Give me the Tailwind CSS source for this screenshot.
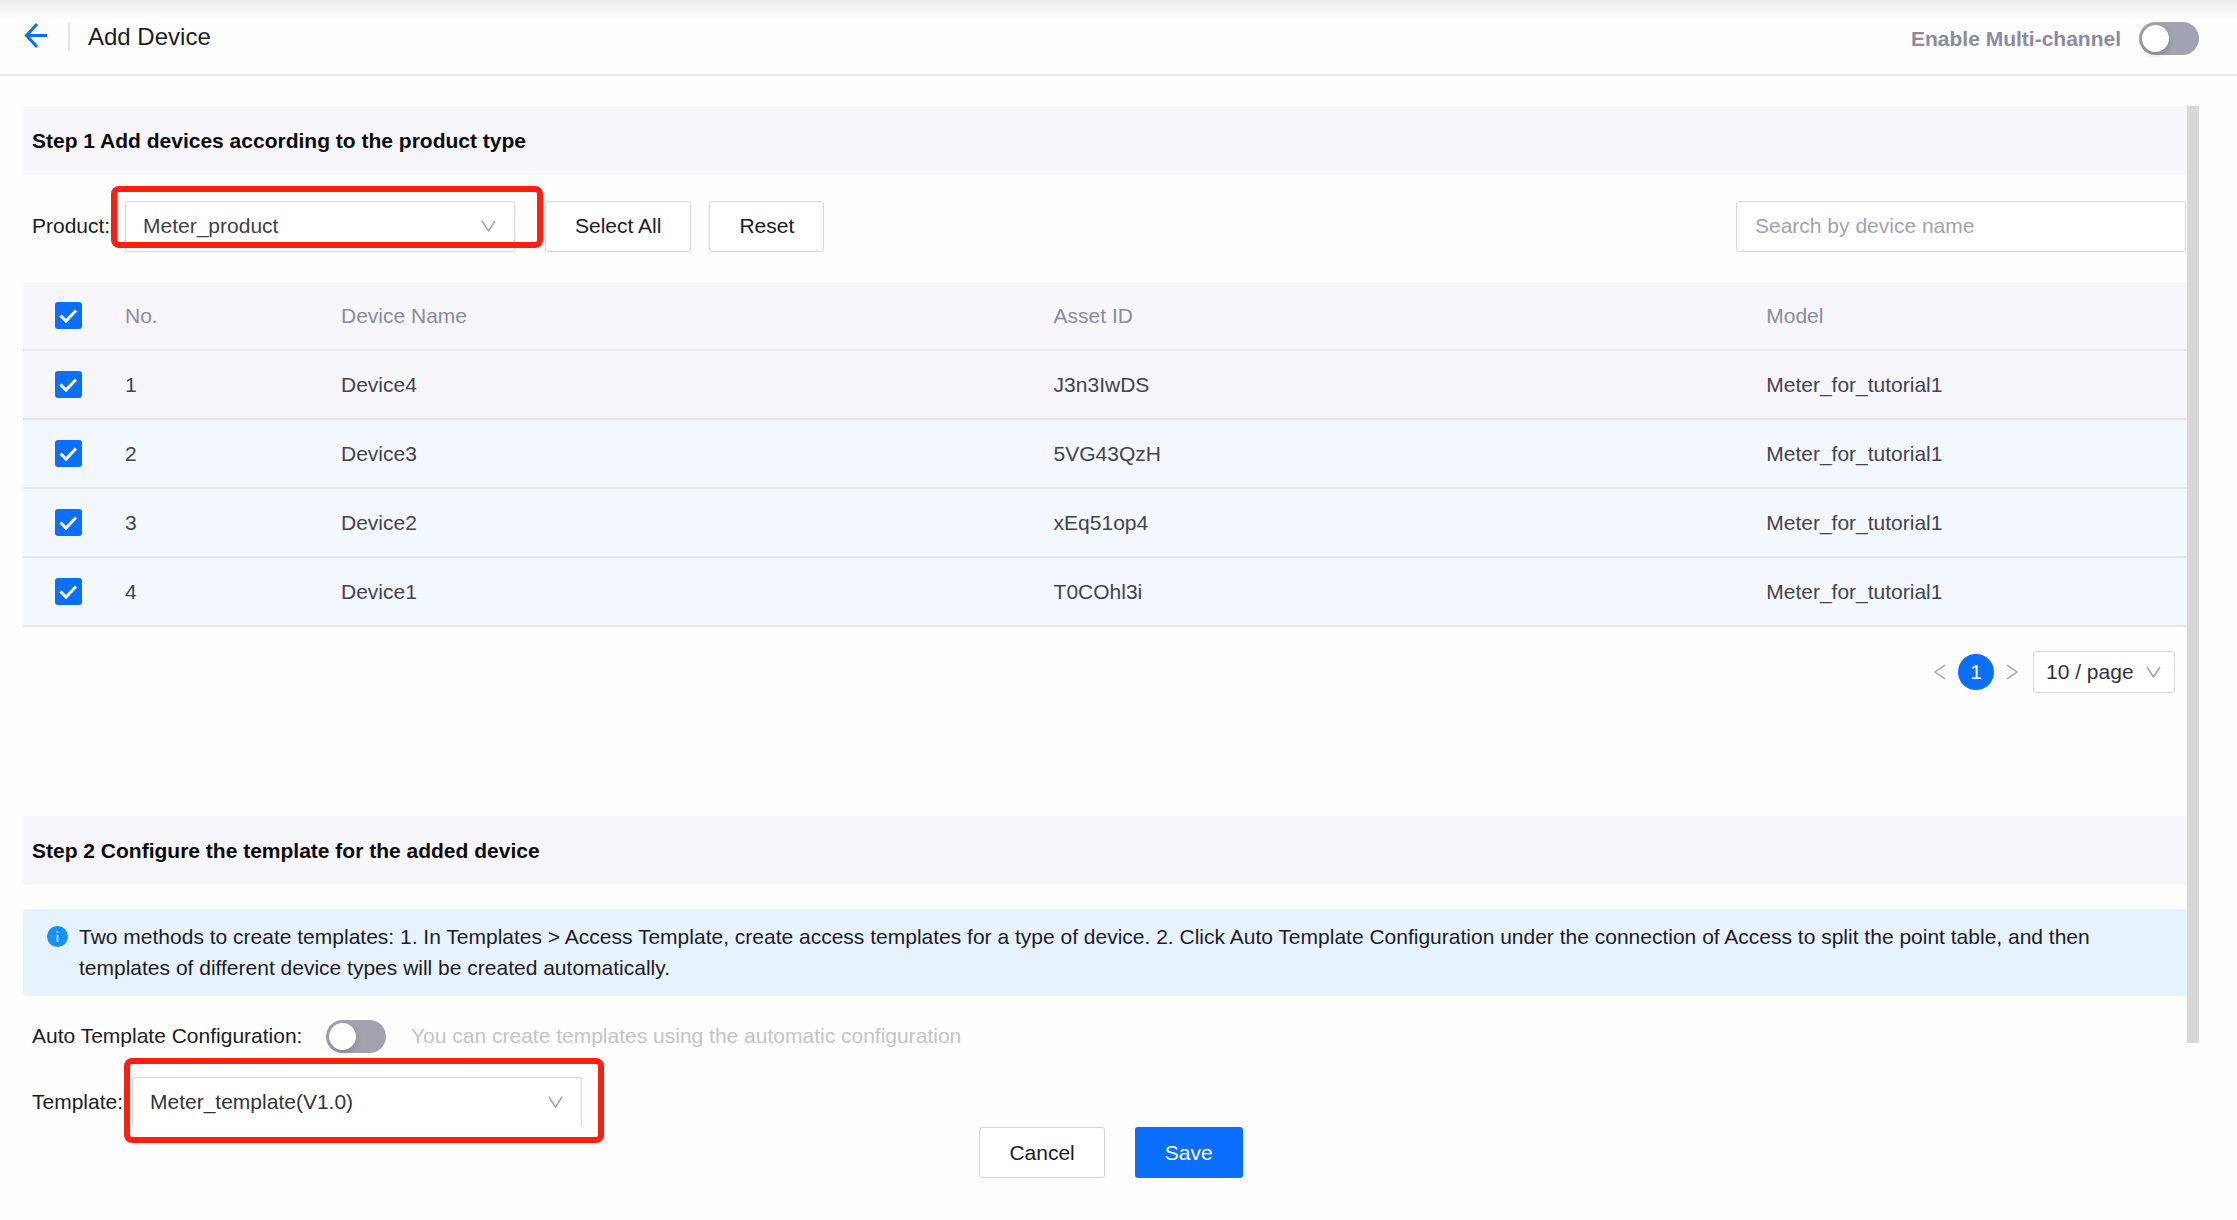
<!DOCTYPE html>
<html lang="en">
<head>
<meta charset="utf-8">
<title>Add Device</title>
<script src="https://cdn.jsdelivr.net/npm/@tailwindcss/browser@4"></script>
</head>
<body class="min-h-screen bg-[#fefefe] font-['Liberation_Sans',Arial,sans-serif] text-[21px] leading-[31px] text-[#1c1c1e]">
<header class="flex items-center justify-between border-b-2 border-[#ebebed] bg-linear-to-b from-[#ededed] to-[#fefefe] to-25% pr-[38px] pl-6 h-[76px]">
  <div class="flex items-center">
    <a href="#" aria-label="Back" class="block"><svg class="block h-7 w-6" viewBox="0 0 24 28" fill="none" stroke="#0b6efd" stroke-width="3"><path d="M13 1 2.500 12.500 13 24M2.500 12.500H23"/></svg></a>
    <span class="ml-5 h-7 w-[2px] bg-[#e3e3e6]"></span>
    <h1 class="ml-[18px] text-2xl">Add Device</h1>
  </div>
  <label class="flex items-center gap-[18px] pt-[2px] font-bold text-[#8b8b9b]">Enable Multi-channel
    <input type="checkbox" role="switch" class="relative h-[33px] w-[60px] appearance-none rounded-full bg-[#a2a2b0] before:absolute before:top-[3px] before:left-[3px] before:size-[27px] before:rounded-full before:bg-white before:shadow-[0_3px_6px_rgba(0,35,11,0.2)]">
  </label>
</header>

<main class="pt-[30px] pr-[38px] pb-10 pl-[23px]">
  <div class="flex">
    <div class="min-w-0 flex-1">
      <section>
        <h2 class="bg-[#f6f6fb] px-[9px] py-[19px] font-bold text-[#0a0a0a]">Step 1 Add devices according to the product type</h2>
        <div class="mt-[26px] flex items-center pr-px pl-[9px]">
          <label for="product" class="w-[93px] pb-[2px]">Product:</label>
          <div class="relative mr-[30px] w-[390px]">
            <select id="product" class="block h-[51px] w-full appearance-none rounded-[3px] border border-[#d5d5df] bg-white px-[17px] pb-[2px] text-[#3f3f4a]"><option>Meter_product</option></select>
            <svg class="pointer-events-none absolute top-[19px] right-[19px] h-3 w-[15px]" viewBox="0 0 15 12" fill="none" stroke="#a2a2b0" stroke-width="1.500"><path d="M1 1 7.500 11 14 1"/></svg>
            <span class="pointer-events-none absolute -top-[15px] -right-[28px] -left-[14px] h-[62px] rounded-lg border-6 border-[#ff1f11]"></span>
          </div>
          <button type="button" class="h-[51px] rounded-[3px] border border-[#d5d5df] bg-white px-[29px] pb-[2px]">Select All</button>
          <button type="button" class="ml-[18px] h-[51px] rounded-[3px] border border-[#d5d5df] bg-white px-[29px] pb-[2px]">Reset</button>
          <input type="search" aria-label="Search by device name" placeholder="Search by device name" class="ml-auto h-[51px] w-[450px] rounded-[3px] border border-[#d5d5df] bg-white px-[18px] pb-[2px] placeholder:text-[#a2a2b0]">
        </div>
        <table class="mt-[30px] w-full table-fixed border-separate border-spacing-0 text-left text-[#43434e] [&_td]:h-[69px] [&_td]:border-b-2 [&_td]:border-[#e4e6ee] [&_td]:px-3 [&_th]:h-[69px] [&_th]:border-b-2 [&_th]:border-[#e8e8ee] [&_th]:px-3 [&_th]:font-normal">
          <colgroup><col class="w-[90px]"><col class="w-[216px]"><col><col><col class="w-1/5"></colgroup>
          <thead class="bg-[#f6f6fb] text-[#8b8b9b]">
            <tr><th><span class="ml-5 grid size-[27px]"><input type="checkbox" checked aria-label="Select all devices" class="col-start-1 row-start-1 size-[27px] appearance-none rounded-[3px] bg-[#0b6efd]"><svg class="pointer-events-none col-start-1 row-start-1 size-[27px]" viewBox="0 0 27 27" fill="none" stroke="#fff" stroke-width="3"><path d="M5.500 13.500 11 19 21 8.500"/></svg></span></th><th>No.</th><th>Device Name</th><th>Asset ID</th><th>Model</th></tr>
          </thead>
          <tbody class="bg-[#f3f8ff]">
            <tr class="bg-[#f6f6fa]"><td><span class="ml-5 grid size-[27px]"><input type="checkbox" checked aria-label="Select Device4" class="col-start-1 row-start-1 size-[27px] appearance-none rounded-[3px] bg-[#0b6efd]"><svg class="pointer-events-none col-start-1 row-start-1 size-[27px]" viewBox="0 0 27 27" fill="none" stroke="#fff" stroke-width="3"><path d="M5.500 13.500 11 19 21 8.500"/></svg></span></td><td>1</td><td>Device4</td><td>J3n3IwDS</td><td>Meter_for_tutorial1</td></tr>
            <tr><td><span class="ml-5 grid size-[27px]"><input type="checkbox" checked aria-label="Select Device3" class="col-start-1 row-start-1 size-[27px] appearance-none rounded-[3px] bg-[#0b6efd]"><svg class="pointer-events-none col-start-1 row-start-1 size-[27px]" viewBox="0 0 27 27" fill="none" stroke="#fff" stroke-width="3"><path d="M5.500 13.500 11 19 21 8.500"/></svg></span></td><td>2</td><td>Device3</td><td>5VG43QzH</td><td>Meter_for_tutorial1</td></tr>
            <tr><td><span class="ml-5 grid size-[27px]"><input type="checkbox" checked aria-label="Select Device2" class="col-start-1 row-start-1 size-[27px] appearance-none rounded-[3px] bg-[#0b6efd]"><svg class="pointer-events-none col-start-1 row-start-1 size-[27px]" viewBox="0 0 27 27" fill="none" stroke="#fff" stroke-width="3"><path d="M5.500 13.500 11 19 21 8.500"/></svg></span></td><td>3</td><td>Device2</td><td>xEq51op4</td><td>Meter_for_tutorial1</td></tr>
            <tr><td><span class="ml-5 grid size-[27px]"><input type="checkbox" checked aria-label="Select Device1" class="col-start-1 row-start-1 size-[27px] appearance-none rounded-[3px] bg-[#0b6efd]"><svg class="pointer-events-none col-start-1 row-start-1 size-[27px]" viewBox="0 0 27 27" fill="none" stroke="#fff" stroke-width="3"><path d="M5.500 13.500 11 19 21 8.500"/></svg></span></td><td>4</td><td>Device1</td><td>T0COhl3i</td><td>Meter_for_tutorial1</td></tr>
          </tbody>
        </table>
        <nav aria-label="Pagination" class="mt-6 flex items-center justify-end pr-3">
          <button type="button" aria-label="Previous page"><svg class="block h-4 w-3" viewBox="0 0 12 16" fill="none" stroke="#a2a2b0" stroke-width="1.500"><path d="M11 1 1 8 11 15"/></svg></button>
          <button type="button" aria-current="page" class="mx-3 size-9 rounded-full bg-[#0b6efd] pb-[2px] text-white">1</button>
          <button type="button" aria-label="Next page"><svg class="block h-4 w-3" viewBox="0 0 12 16" fill="none" stroke="#a2a2b0" stroke-width="1.500"><path d="M1 1 11 8 1 15"/></svg></button>
          <div class="relative ml-[15px] w-[142px]">
            <select aria-label="Page size" class="block h-[42px] w-full appearance-none rounded-[3px] border border-[#d5d5df] bg-white px-[12px] pb-[2px] text-[#33333c]"><option>10 / page</option></select>
            <svg class="pointer-events-none absolute top-[15px] right-[14px] h-3 w-[15px]" viewBox="0 0 15 12" fill="none" stroke="#a2a2b0" stroke-width="1.500"><path d="M1 1 7.500 11 14 1"/></svg>
          </div>
        </nav>
      </section>

      <section class="mt-[123px]">
        <h2 class="bg-[#f6f6fb] px-[9px] py-[19px] font-bold text-[#0a0a0a]">Step 2 Configure the template for the added device</h2>
        <div role="note" class="mt-6 flex gap-[11px] rounded-[4px] bg-[#e7f2ff] pt-3 pr-6 pb-[13px] pl-6">
          <svg class="mt-[5px] size-[21px] shrink-0" viewBox="0 0 21 21"><circle cx="10.500" cy="10.500" r="10.500" fill="#1890ff"/><path d="M10.500 5v2M10.500 9v7" stroke="#fff" stroke-width="1.500"/></svg>
          <p>Two methods to create templates: 1. In Templates &gt; Access Template, create access templates for a type of device. 2. Click Auto Template Configuration under the connection of Access to split the point table, and then templates of different device types will be created automatically.</p>
        </div>
        <div class="mt-6 flex items-center pl-[9px]">
          <label for="auto" class="w-[294px] pb-[2px]">Auto Template Configuration:</label>
          <input id="auto" type="checkbox" role="switch" class="relative h-[33px] w-[60px] appearance-none rounded-full bg-[#a2a2b0] before:absolute before:top-[3px] before:left-[3px] before:size-[27px] before:rounded-full before:bg-white before:shadow-[0_3px_6px_rgba(0,35,11,0.2)]">
          <span class="ml-[25px] pb-[2px] text-[#c3c3c6]">You can create templates using the automatic configuration</span>
        </div>
        <div class="mt-6 flex items-center pl-[9px]">
          <label for="template" class="w-[100px] pb-[2px]">Template:</label>
          <div class="relative w-[450px]">
            <select id="template" class="block h-[50px] w-full appearance-none rounded-t-[3px] border border-b-0 border-[#d5d5df] bg-white px-[17px] pb-[2px] text-[#33333c]"><option>Meter_template(V1.0)</option></select>
            <svg class="pointer-events-none absolute top-[19px] right-[19px] h-3 w-[15px]" viewBox="0 0 15 12" fill="none" stroke="#a2a2b0" stroke-width="1.500"><path d="M1 1 7.500 11 14 1"/></svg>
            <span class="pointer-events-none absolute -top-[19px] -right-[22px] -left-[8px] h-[85px] rounded-lg border-6 border-[#ff1f11]"></span>
          </div>
        </div>
      </section>
    </div>
    <div class="w-3 pb-[84px]"><div class="h-full bg-[#d8d8d8]"></div></div>
  </div>

  <div class="flex justify-center gap-[30px]">
    <button type="button" class="h-[51px] rounded-[3px] border border-[#d5d5df] bg-white px-[29px]">Cancel</button>
    <button type="button" class="h-[51px] rounded-[3px] bg-[#0b6efd] px-[30px] text-white">Save</button>
  </div>
</main>
</body>
</html>
